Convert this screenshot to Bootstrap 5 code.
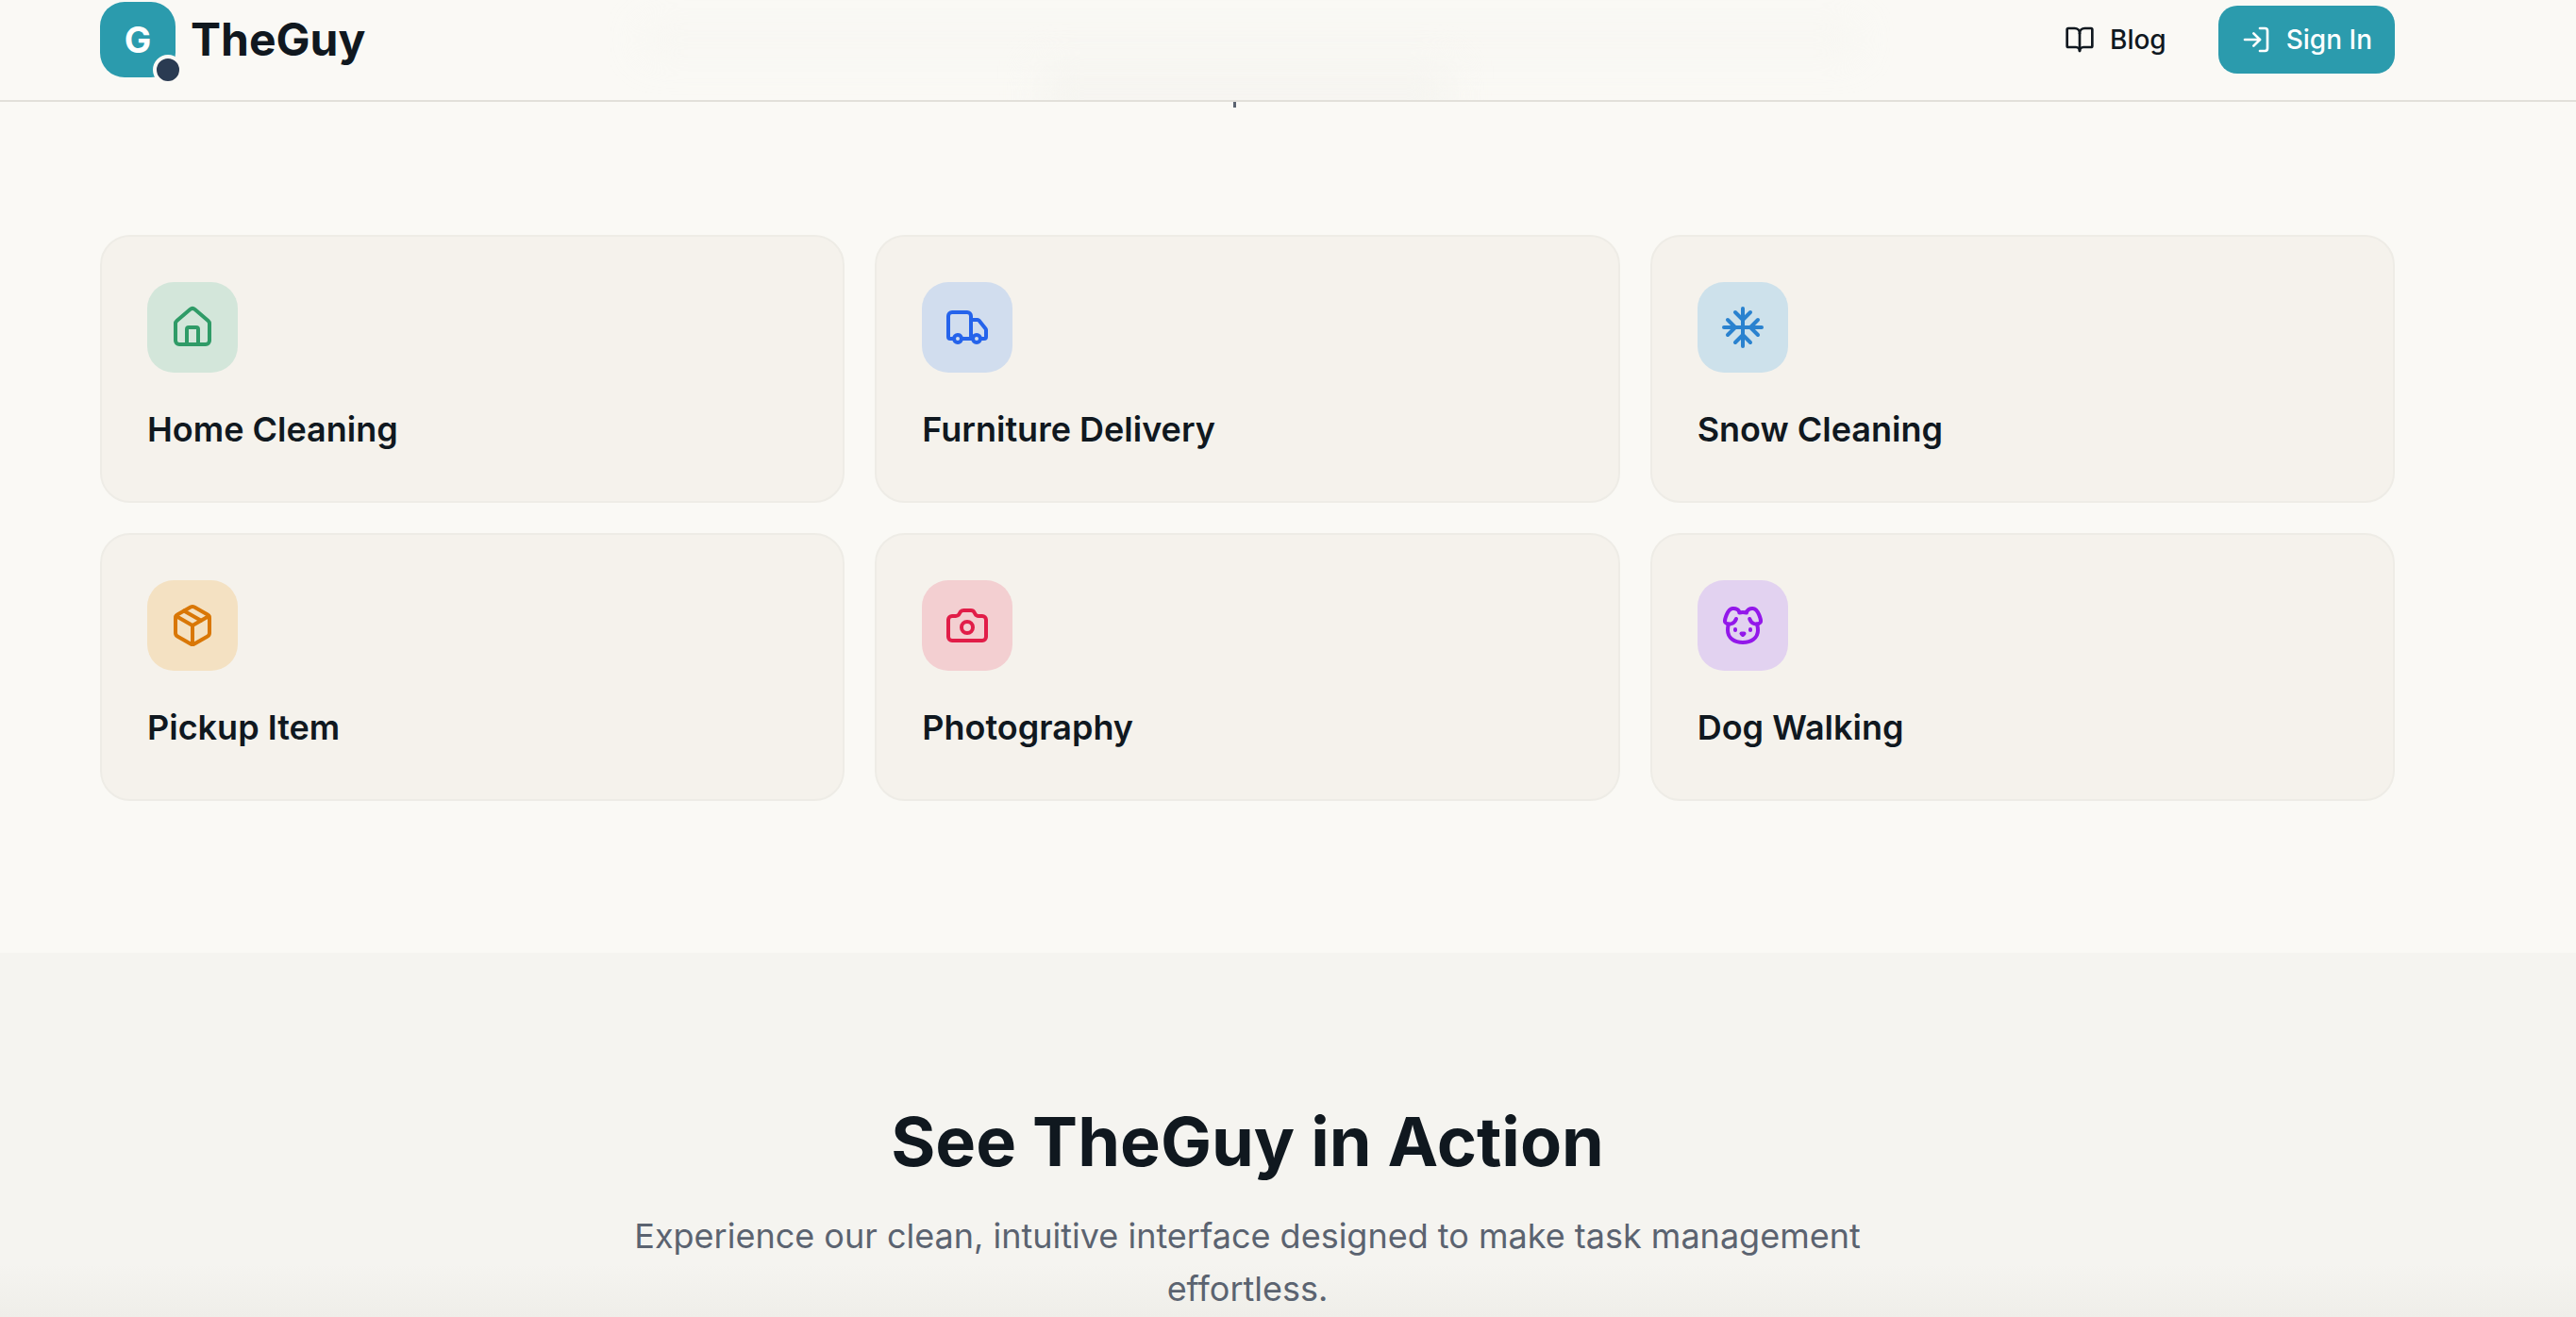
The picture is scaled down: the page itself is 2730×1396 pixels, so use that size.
<!DOCTYPE html>
<html lang="en">
<head>
  <meta charset="UTF-8">
  <meta name="viewport" content="width=device-width, initial-scale=1.0">
  <title>TheGuy</title>
  <link href="https://cdn.jsdelivr.net/npm/bootstrap@5.3.0/dist/css/bootstrap.min.css" rel="stylesheet">
  <style>
    html, body { height: 100%; overflow: hidden; }
    body {
      background: #faf9f5;
      color: #10181f;
      font-family: Inter, "Liberation Sans", sans-serif;
    }
    .lucide {
      fill: none;
      stroke: currentColor;
      stroke-width: 2;
      stroke-linecap: round;
      stroke-linejoin: round;
      flex: none;
    }
    /* top bar */
    .top-bar {
      height: 108px;
      padding: 0 192px 0 106px;
      border-bottom: 2px solid #e2e0da;
      overflow: hidden;
    }
    .bar-blur {
      position: absolute;
      background: #f2f1ec;
      filter: blur(20px);
    }
    .blur-wide { left: 680px; top: 24px; width: 1290px; height: 36px; opacity: .3; }
    .blur-mid { left: 1100px; top: 70px; width: 440px; height: 60px; opacity: .5; }
    .logo-wrap { margin-top: -22px; }
    .logo-box {
      width: 80px;
      height: 80px;
      border-radius: 26px;
      background: #2b9bad;
      color: #fff;
      font-size: 38px;
      font-weight: 700;
    }
    .logo-dot {
      right: -8px;
      bottom: -8px;
      width: 32px;
      height: 32px;
      border: 4px solid #faf9f5;
      border-radius: 50%;
      background: #2a3b52;
    }
    .logo-name { font-size: 48px; font-weight: 700; line-height: 1; }
    .bar-actions { margin-top: -22px; }
    .blog-link { font-size: 28px; font-weight: 500; color: #10181f; gap: 16px; margin-right: 55px; }
    .signin-btn {
      height: 72px;
      padding: 0 24px;
      gap: 16px;
      font-size: 28px;
      font-weight: 500;
      border: 0;
      border-radius: 20px;
      --bs-btn-bg: #2b9bad;
      --bs-btn-color: #fff;
      --bs-btn-hover-bg: #258999;
      --bs-btn-hover-color: #fff;
    }
    /* services */
    .service-area { padding: 141px 192px 161px 106px; }
    .text-tick {
      left: 1307px;
      top: 0;
      width: 3px;
      height: 6px;
      background: #5b6370;
    }
    .service-grid { --bs-gutter-x: 32px; --bs-gutter-y: 32px; }
    .service-card {
      height: 284px;
      padding: 48px;
      background: #f5f2ec;
      border: 2px solid #eeece6;
      border-radius: 32px;
    }
    .service-icon {
      width: 96px;
      height: 96px;
      margin-bottom: 32px;
      border-radius: 28px;
    }
    .service-name { font-size: 36px; font-weight: 600; line-height: 56px; margin: 0; }
    .tone-green { background: #d3e6da; color: #2f9b67; }
    .tone-blue { background: #d1ddee; color: #2563eb; }
    .tone-sky { background: #cde1eb; color: #2a82cf; }
    .tone-amber { background: #f4e1c2; color: #d97706; }
    .tone-rose { background: #f3cfd1; color: #e11d48; }
    .tone-violet { background: #e2d2f0; color: #9318ea; }
    /* action */
    .action-area {
      height: 386px;
      padding: 160px 192px 0 106px;
      background: linear-gradient(to bottom, #f5f4f0 330px, #efeee9 386px);
    }
    .action-title { font-size: 72px; font-weight: 700; line-height: 80px; margin-bottom: 32px; }
    .action-text {
      max-width: 1344px;
      margin: 0 auto;
      font-size: 36px;
      line-height: 56px;
      color: #5b6370;
    }
  </style>
</head>
<body>
  <header class="top-bar d-flex align-items-center justify-content-between position-relative">
    <div class="bar-blur blur-wide"></div>
    <div class="bar-blur blur-mid"></div>
    <div class="logo-wrap d-flex align-items-center gap-3 position-relative">
      <div class="logo-box d-flex align-items-center justify-content-center position-relative">
        G
        <span class="logo-dot position-absolute"></span>
      </div>
      <span class="logo-name">TheGuy</span>
    </div>
    <div class="bar-actions d-flex align-items-center position-relative">
      <a href="#" class="blog-link d-flex align-items-center text-decoration-none">
        <svg class="lucide" width="32" height="32" viewBox="0 0 24 24"><path d="M12 7v14"/><path d="M3 18a1 1 0 0 1-1-1V4a1 1 0 0 1 1-1h5a4 4 0 0 1 4 4 4 4 0 0 1 4-4h5a1 1 0 0 1 1 1v13a1 1 0 0 1-1 1h-6a3 3 0 0 0-3 3 3 3 0 0 0-3-3z"/></svg>
        Blog
      </a>
      <button type="button" class="btn signin-btn d-flex align-items-center">
        <svg class="lucide" width="32" height="32" viewBox="0 0 24 24"><path d="M15 3h4a2 2 0 0 1 2 2v14a2 2 0 0 1-2 2h-4"/><polyline points="10 17 15 12 10 7"/><line x1="15" x2="3" y1="12" y2="12"/></svg>
        Sign In
      </button>
    </div>
  </header>

  <main>
    <section class="service-area position-relative">
      <span class="text-tick position-absolute"></span>
      <div class="row row-cols-3 service-grid">
        <div class="col">
          <div class="service-card">
            <div class="service-icon tone-green d-flex align-items-center justify-content-center">
              <svg class="lucide" width="48" height="48" viewBox="0 0 24 24"><path d="M15 21v-8a1 1 0 0 0-1-1h-4a1 1 0 0 0-1 1v8"/><path d="M3 10a2 2 0 0 1 .709-1.528l7-5.999a2 2 0 0 1 2.582 0l7 5.999A2 2 0 0 1 21 10v9a2 2 0 0 1-2 2H5a2 2 0 0 1-2-2z"/></svg>
            </div>
            <h3 class="service-name">Home Cleaning</h3>
          </div>
        </div>
        <div class="col">
          <div class="service-card">
            <div class="service-icon tone-blue d-flex align-items-center justify-content-center">
              <svg class="lucide" width="48" height="48" viewBox="0 0 24 24"><path d="M14 18V6a2 2 0 0 0-2-2H4a2 2 0 0 0-2 2v11a1 1 0 0 0 1 1h2"/><path d="M15 18H9"/><path d="M19 18h2a1 1 0 0 0 1-1v-3.65a1 1 0 0 0-.22-.624l-3.48-4.35A1 1 0 0 0 17.52 8H14"/><circle cx="17" cy="18" r="2"/><circle cx="7" cy="18" r="2"/></svg>
            </div>
            <h3 class="service-name">Furniture Delivery</h3>
          </div>
        </div>
        <div class="col">
          <div class="service-card">
            <div class="service-icon tone-sky d-flex align-items-center justify-content-center">
              <svg class="lucide" width="48" height="48" viewBox="0 0 24 24"><line x1="2" x2="22" y1="12" y2="12"/><line x1="12" x2="12" y1="2" y2="22"/><path d="m20 16-4-4 4-4"/><path d="m4 8 4 4-4 4"/><path d="m16 4-4 4-4-4"/><path d="m8 20 4-4 4 4"/></svg>
            </div>
            <h3 class="service-name">Snow Cleaning</h3>
          </div>
        </div>
        <div class="col">
          <div class="service-card">
            <div class="service-icon tone-amber d-flex align-items-center justify-content-center">
              <svg class="lucide" width="48" height="48" viewBox="0 0 24 24"><path d="m7.5 4.27 9 5.15"/><path d="M21 8a2 2 0 0 0-1-1.73l-7-4a2 2 0 0 0-2 0l-7 4A2 2 0 0 0 3 8v8a2 2 0 0 0 1 1.73l7 4a2 2 0 0 0 2 0l7-4A2 2 0 0 0 21 16Z"/><path d="m3.3 7 8.7 5 8.7-5"/><path d="M12 22V12"/></svg>
            </div>
            <h3 class="service-name">Pickup Item</h3>
          </div>
        </div>
        <div class="col">
          <div class="service-card">
            <div class="service-icon tone-rose d-flex align-items-center justify-content-center">
              <svg class="lucide" width="48" height="48" viewBox="0 0 24 24"><path d="M13.997 4a2 2 0 0 1 1.76 1.05l.486.9A2 2 0 0 0 18.003 7H20a2 2 0 0 1 2 2v9a2 2 0 0 1-2 2H4a2 2 0 0 1-2-2V9a2 2 0 0 1 2-2h1.997a2 2 0 0 0 1.759-1.048l.489-.904A2 2 0 0 1 10.004 4z"/><circle cx="12" cy="13" r="3"/></svg>
            </div>
            <h3 class="service-name">Photography</h3>
          </div>
        </div>
        <div class="col">
          <div class="service-card">
            <div class="service-icon tone-violet d-flex align-items-center justify-content-center">
              <svg class="lucide" width="48" height="48" viewBox="0 0 24 24"><path d="M11.25 16.25h1.5L12 17z"/><path d="M16 14v.5"/><path d="M4.42 11.247A13.152 13.152 0 0 0 4 14.556C4 18.728 7.582 21 12 21s8-2.272 8-6.444a11.702 11.702 0 0 0-.493-3.309"/><path d="M8 14v.5"/><path d="M8.5 8.5c-.384 1.05-1.083 2.028-2.344 2.5-1.931.722-3.576-.297-3.656-1-.113-.994 1.177-6.53 4-7 1.923-.321 3.651.845 3.651 2.235A7.497 7.497 0 0 1 14 5.277c0-1.39 1.844-2.598 3.5-2.277 2.823.47 4.113 6.006 4 7-.08.703-1.725 1.722-3.656 1-1.261-.472-1.855-1.45-2.239-2.5"/></svg>
            </div>
            <h3 class="service-name">Dog Walking</h3>
          </div>
        </div>
      </div>
    </section>

    <section class="action-area text-center">
      <h2 class="action-title">See TheGuy in Action</h2>
      <p class="action-text">Experience our clean, intuitive interface designed to make task management effortless.</p>
    </section>
  </main>

  <script src="https://cdn.jsdelivr.net/npm/bootstrap@5.3.0/dist/js/bootstrap.bundle.min.js"></script>
</body>
</html>
